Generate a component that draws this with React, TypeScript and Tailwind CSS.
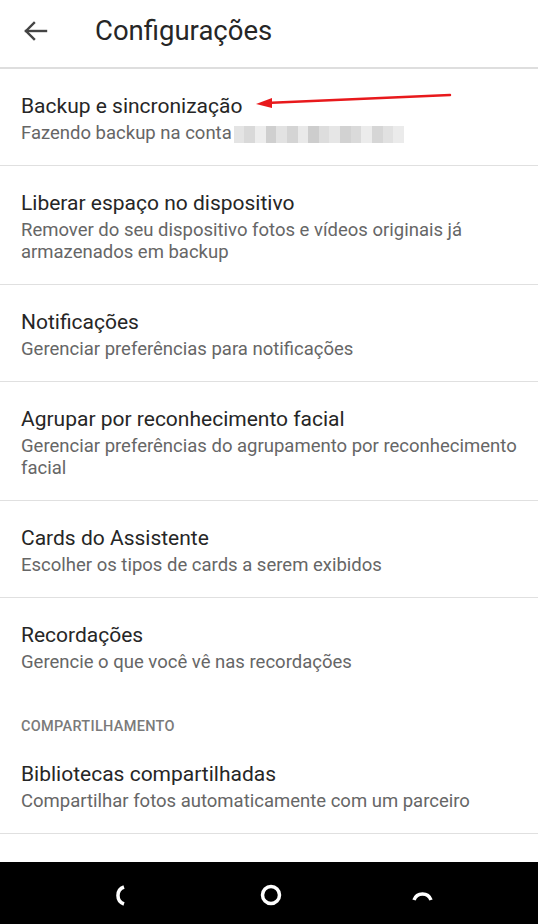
import React from 'react';

type Item = { title: string; subtitle?: React.ReactNode; divider?: boolean };

const Blur = () => {
    // pixelated e-mail address
    const blocks = ['#e4e4e4', '#d9d9d9', '#ededed', '#cfcfcf', '#e2e2e2', '#d4d4d4', '#e9e9e9', '#cdcdcd', '#dddddd', '#e6e6e6', '#d2d2d2', '#dadada', '#ececec', '#d6d6d6', '#e1e1e1', '#ebebeb'];
    return (
        <span className="inline-flex align-middle ml-[2px] h-[17px] w-[170px] overflow-hidden">
            {blocks.map((c, i) => (
                <span key={i} className="h-full flex-1" style={{ background: c }} />
            ))}
        </span>
    );
};

const Row = ({ title, subtitle, divider = true }: Item) => (
    <div className={divider ? 'pl-[21px] pr-[10px] pt-[24px] pb-[21px] border-b border-[#e0e0e0]' : 'pl-[21px] pr-[10px] pt-[24px] pb-[21px]'}>
        <div className="text-[21px] leading-[26px] text-[#262626]">{title}</div>
        {subtitle && <div className="text-[18.5px] leading-[22px] text-[#666666] mt-[3px]">{subtitle}</div>}
    </div>
);

export default function App() {
    return (
        <div className="relative flex flex-col h-[924px] w-[538px] bg-white overflow-hidden" style={{ fontFamily: 'Roboto, "Noto Sans", sans-serif' }}>
            {/* Toolbar */}
            <header className="h-[69px] shrink-0 flex items-center pb-[6px] border-b-2 border-[#dedede]">
                <svg width="24" height="20" viewBox="0 0 24 20" className="ml-[24px]" fill="none" stroke="#444444" strokeWidth="2.4" strokeLinecap="square">
                    <path d="M2 10H22" />
                    <path d="M10 2L2 10L10 18" />
                </svg>
                <h1 className="ml-[47px] text-[27.5px] text-[#262626] leading-none">Configurações</h1>
            </header>

            {/* Settings list */}
            <main className="flex-1 overflow-hidden">
                <Row title="Backup e sincronização" subtitle={<>Fazendo backup na conta<Blur /></>} />
                <Row
                    title="Liberar espaço no dispositivo"
                    subtitle="Remover do seu dispositivo fotos e vídeos originais já armazenados em backup"
                />
                <Row title="Notificações" subtitle="Gerenciar preferências para notificações" />
                <Row
                    title="Agrupar por reconhecimento facial"
                    subtitle="Gerenciar preferências do agrupamento por reconhecimento facial"
                />
                <Row title="Cards do Assistente" subtitle="Escolher os tipos de cards a serem exibidos" />
                <Row title="Recordações" subtitle="Gerencie o que você vê nas recordações" divider={false} />

                <div className="px-[21px] pt-[23px] text-[14.5px] leading-[20px] font-medium tracking-[0.3px] text-[#7a7a7a]">
                    COMPARTILHAMENTO
                </div>
                <Row title="Bibliotecas compartilhadas" subtitle="Compartilhar fotos automaticamente com um parceiro" />
                <Row title="Adicionar fotos de parceiros" divider={false} />
            </main>

            {/* Android nav bar */}
            <nav className="h-[62px] shrink-0 bg-black flex items-center">
                <svg width="538" height="62" viewBox="0 0 538 62" fill="none" stroke="white" strokeWidth="3.5">
                    <path d="M124 25 A9 9 0 0 0 124 42" />
                    <circle cx="271" cy="33" r="8.5" />
                    <path d="M414 38 A9 9 0 0 1 431 38" />
                </svg>
            </nav>

            {/* Red annotation arrow */}
            <svg className="absolute left-0 top-0 pointer-events-none" width="538" height="200" viewBox="0 0 538 200">
                <line x1="450" y1="95" x2="266" y2="103" stroke="#e8191c" strokeWidth="2.5" strokeLinecap="round" />
                <polygon points="256,104 272,98 272,108" fill="#e8191c" />
            </svg>
        </div>
    );
}
